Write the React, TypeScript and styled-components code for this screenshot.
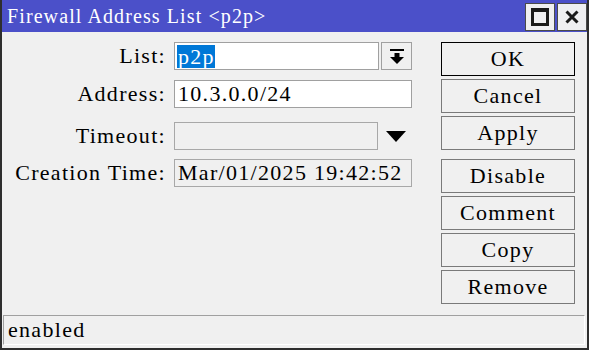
import * as React from 'react';
import styled, { createGlobalStyle } from 'styled-components';

const GlobalStyle = createGlobalStyle`
	html, body {
		margin: 0;
		padding: 0;
		background: #f0f0f0;
	}
`;

const Window = styled.div`
	box-sizing: border-box;
	width: 589px;
	height: 350px;
	border: 2px solid #2e2e2e;
	border-top: none;
	background: #f0f0f0;
	display: flex;
	flex-direction: column;
	font-family: "Liberation Serif", "DejaVu Serif", serif;
	font-size: 22px;
	letter-spacing: 1.3px;
	color: #000;
`;

const TitleBar = styled.div`
	height: 32px;
	flex: none;
	display: flex;
	align-items: center;
	padding: 0 0 0 5px;
	background: #4b50c9;
`;

const Title = styled.span`
	color: #fff;
	font-size: 20px;
	letter-spacing: 1.1px;
	flex: 1;
`;

const TitleButtons = styled.div`
	display: flex;
	gap: 2px;
	margin-top: 2px;
`;

const TitleButton = styled.div`
	box-sizing: border-box;
	width: 30px;
	height: 28px;
	border: 1px solid #4a4a4a;
	background: #efeff1;
	display: flex;
	align-items: center;
	justify-content: center;
`;

const Body = styled.div`
	flex: 1;
	display: flex;
	padding: 10px 0 0 0;
`;

const Form = styled.div`
	display: flex;
	flex-direction: column;
`;

const Row = styled.div<{ $top?: number }>`
	display: grid;
	grid-template-columns: 164px 238px;
	column-gap: 8px;
	align-items: center;
	height: 28px;
	margin-top: ${(p) => p.$top || 0}px;
`;

const Label = styled.div`
	text-align: right;
	white-space: nowrap;
`;

const FieldCell = styled.div`
	display: flex;
	align-items: center;
	height: 28px;
`;

const Field = styled.div<{ $disabled?: boolean; $width?: number }>`
	box-sizing: border-box;
	height: 28px;
	${(p) => (p.$width ? `width: ${p.$width}px; flex: none;` : 'flex: 1;')}
	border: 1px solid ${(p) => (p.$disabled ? '#a8a8a8' : '#a0a0a0')};
	background: ${(p) => (p.$disabled ? '#f0f0f0' : '#fff')};
	display: flex;
	align-items: center;
	padding-left: 3px;
	white-space: nowrap;
	overflow: hidden;
`;

const Selected = styled.span`
	display: inline-block;
	height: 23px;
	line-height: 23px;
	margin-left: -1px;
	padding: 0 0 0 1px;
	background: #0078d7;
	color: #fff;
`;

const DropButton = styled.div`
	box-sizing: border-box;
	width: 31px;
	height: 28px;
	margin-left: 2px;
	border: 1px solid #a0a0a0;
	background: #f0f0f0;
	display: flex;
	align-items: center;
	justify-content: center;
	padding-top: 1px;
`;

const ArrowSlot = styled.div`
	flex: 1;
	display: flex;
	align-items: center;
	justify-content: center;
	padding-left: 2px;
`;

const Buttons = styled.div`
	display: flex;
	flex-direction: column;
	gap: 3px;
	margin-left: 29px;
	width: 134px;
`;

const Button = styled.div<{ $default?: boolean; $split?: boolean }>`
	box-sizing: border-box;
	height: 34px;
	border: 1px solid ${(p) => (p.$default ? '#000' : '#7a7a7a')};
	background: #f0f0f0;
	display: flex;
	align-items: center;
	justify-content: center;
	margin-top: ${(p) => (p.$split ? 6 : 0)}px;
`;

const StatusBar = styled.div`
	box-sizing: border-box;
	flex: none;
	height: 30px;
	margin: 0 2px 3px 1px;
	border-top: 1px solid #a0a0a0;
	border-left: 1px solid #a0a0a0;
	border-right: 1px solid #fff;
	border-bottom: 1px solid #fff;
	padding-left: 4px;
	display: flex;
	align-items: center;
`;

const MaximizeIcon = () => (
	<svg width="18" height="18" viewBox="0 0 18 18">
		<rect x="1.5" y="1.5" width="15" height="15" fill="none" stroke="#1a1a1a" strokeWidth="3" />
		<rect x="0" y="0" width="18" height="4" fill="#1a1a1a" />
	</svg>
);

const CloseIcon = () => (
	<svg width="14" height="14" viewBox="0 0 14 14">
		<path d="M1.5 1.5 L12.5 12.5 M12.5 1.5 L1.5 12.5" stroke="#1a1a1a" strokeWidth="3" />
	</svg>
);

const BottomArrowIcon = () => (
	<svg width="14" height="16" viewBox="0 0 14 16">
		<rect x="0" y="0" width="14" height="2" fill="#000" />
		<rect x="4.5" y="4" width="5" height="4" fill="#000" />
		<polygon points="0,8 14,8 7,15" fill="#000" />
	</svg>
);

const DownTriangle = () => (
	<svg width="20" height="11" viewBox="0 0 20 11">
		<polygon points="0,0 20,0 10,11" fill="#000" />
	</svg>
);

const actions = ['OK', 'Cancel', 'Apply', 'Disable', 'Comment', 'Copy', 'Remove'];

export default function App() {
	return (
		<>
			<GlobalStyle />
			<Window>
				<TitleBar>
					<Title>Firewall Address List &lt;p2p&gt;</Title>
					<TitleButtons>
						<TitleButton>
							<MaximizeIcon />
						</TitleButton>
						<TitleButton>
							<CloseIcon />
						</TitleButton>
					</TitleButtons>
				</TitleBar>
				<Body>
					<Form>
						<Row>
							<Label>List:</Label>
							<FieldCell>
								<Field>
									<Selected>p2p</Selected>
								</Field>
								<DropButton>
									<BottomArrowIcon />
								</DropButton>
							</FieldCell>
						</Row>
						<Row $top={10}>
							<Label>Address:</Label>
							<FieldCell>
								<Field>10.3.0.0/24</Field>
							</FieldCell>
						</Row>
						<Row $top={14}>
							<Label>Timeout:</Label>
							<FieldCell>
								<Field $disabled $width={204} />
								<ArrowSlot>
									<DownTriangle />
								</ArrowSlot>
							</FieldCell>
						</Row>
						<Row $top={9}>
							<Label>Creation Time:</Label>
							<FieldCell>
								<Field $disabled>Mar/01/2025 19:42:52</Field>
							</FieldCell>
						</Row>
					</Form>
					<Buttons>
						{actions.map((a) => (
							<Button key={a} $default={a === 'OK'} $split={a === 'Disable'}>
								{a}
							</Button>
						))}
					</Buttons>
				</Body>
				<StatusBar>enabled</StatusBar>
			</Window>
		</>
	);
}
